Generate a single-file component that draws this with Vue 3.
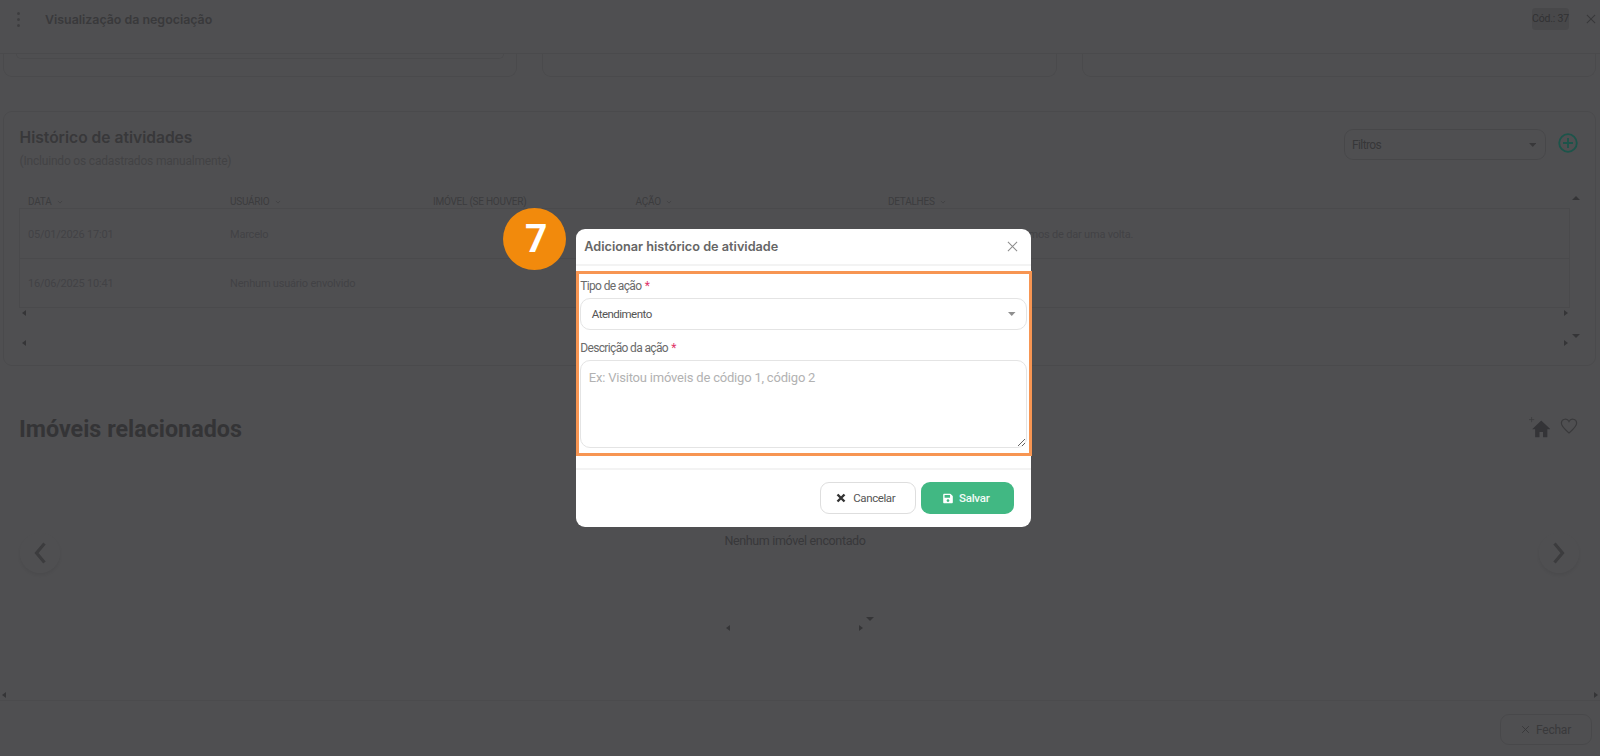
<script setup>
const columns = [
  { label: 'Data', sort: true },
  { label: 'Usuário', sort: true },
  { label: 'Imóvel (se houver)', sort: false },
  { label: 'Ação', sort: true },
  { label: 'Detalhes', sort: true },
]
const rows = [
  { date: '05/01/2026 17:01', user: 'Marcelo', details: 'Fez contato com cliente e ficamos de dar uma volta.' },
  { date: '16/06/2025 10:41', user: 'Nenhum usuário envolvido', details: '' },
]
</script>

<template>
  <div class="page">
    <header class="topbar">
      <div class="topbar-left">
        <span class="dots"><i></i><i></i><i></i></span>
        <h1 class="topbar-title">Visualização da negociação</h1>
      </div>
      <div class="topbar-right">
        <span class="code">Cód.: 37</span>
        <svg class="topbar-close" viewBox="0 0 12 12"><path d="M1 1l10 10M11 1L1 11" /></svg>
      </div>
    </header>

    <main class="content">
      <section class="cards">
        <div class="mini-card"><div class="mini-inner"></div></div>
        <div class="mini-card"></div>
        <div class="mini-card"></div>
      </section>

      <section class="history">
        <div class="history-head">
          <div>
            <h2 class="history-title">Histórico de atividades</h2>
            <p class="history-sub">(Incluindo os cadastrados manualmente)</p>
          </div>
          <div class="history-tools">
            <div class="filter">
              <span>Filtros</span>
              <svg class="caret" viewBox="0 0 10 5" preserveAspectRatio="none"><path d="M0 0h10L5 5z" /></svg>
            </div>
            <svg class="plus" viewBox="0 0 20 20">
              <circle cx="10" cy="10" r="8.800" />
              <path d="M10 5v10M5 10h10" />
            </svg>
          </div>
        </div>

        <div class="history-body">
          <div class="table-area">
            <div class="table-row table-header">
              <div v-for="col in columns" :key="col.label" class="th">
                {{ col.label }}
                <svg v-if="col.sort" class="sort" viewBox="0 0 8 5"><path d="M1 1l3 3 3-3" /></svg>
              </div>
            </div>
            <div class="table-rows">
              <div v-for="row in rows" :key="row.date" class="table-row tr">
                <div class="td">{{ row.date }}</div>
                <div class="td">{{ row.user }}</div>
                <div class="td"></div>
                <div class="td"></div>
                <div class="td">{{ row.details }}</div>
              </div>
            </div>
            <div class="hbar"><span class="tri tri-l"></span><span class="tri tri-r"></span></div>
            <div class="hbar hbar-second"><span class="tri tri-l"></span><span class="tri tri-r"></span></div>
          </div>
          <div class="vbar"><span class="tri tri-u"></span><span class="tri tri-d"></span></div>
        </div>
      </section>

      <section class="related">
        <div class="related-head">
          <h2 class="related-title">Imóveis relacionados</h2>
          <div class="related-icons">
            <svg class="home" viewBox="0 0 24 24">
              <path class="spark" d="M3 0v6M0 3h6" />
              <path d="M14 4L3.500 14H7v9h5v-6h4v6h5v-9h3.500z" />
            </svg>
            <svg class="heart" viewBox="0 0 24 22">
              <path d="M12 20.500C6 15.500 1.500 12 1.500 7A5.500 5.500 0 0 1 12 4.800 5.500 5.500 0 0 1 22.500 7c0 5-4.500 8.500-10.500 13.500z" />
            </svg>
          </div>
        </div>
        <div class="carousel">
          <button class="nav-circle" type="button">
            <svg viewBox="0 0 14 24"><path d="M11.500 2.500L3.500 12l8 9.500" /></svg>
          </button>
          <div class="carousel-center">
            <div class="carousel-inner">
              <p class="empty">Nenhum imóvel encontado</p>
              <div class="hbar carousel-bar"><span class="tri tri-l"></span><span class="tri tri-r"></span></div>
              <span class="tri tri-d carousel-down"></span>
            </div>
          </div>
          <button class="nav-circle" type="button">
            <svg viewBox="0 0 14 24"><path d="M2.500 2.500l8 9.500-8 9.500" /></svg>
          </button>
        </div>
      </section>

      <div class="hbar page-bar"><span class="tri tri-l"></span><span class="tri tri-r"></span></div>
    </main>

    <footer class="footer">
      <button class="close-btn" type="button">
        <svg viewBox="0 0 12 12"><path d="M1.500 1.500l9 9M10.500 1.500l-9 9" /></svg>
        Fechar
      </button>
    </footer>

    <div class="backdrop">
      <div class="modal">
        <div class="badge">7</div>
        <div class="modal-head">
          <h3 class="modal-title">Adicionar histórico de atividade</h3>
          <svg class="modal-close" viewBox="0 0 12 12"><path d="M1 1l10 10M11 1L1 11" /></svg>
        </div>
        <div class="modal-body">
          <label class="field-label">Tipo de ação <b>*</b></label>
          <div class="select">
            <span>Atendimento</span>
            <svg class="caret" viewBox="0 0 10 5" preserveAspectRatio="none"><path d="M0 0h10L5 5z" /></svg>
          </div>
          <label class="field-label second">Descrição da ação <b>*</b></label>
          <textarea class="textarea" placeholder="Ex: Visitou imóveis de código 1, código 2"></textarea>
        </div>
        <div class="modal-foot">
          <button class="btn btn-cancel" type="button">
            <svg viewBox="0 0 10 10"><path d="M1.500 1.500l7 7M8.500 1.500l-7 7" /></svg>
            Cancelar
          </button>
          <button class="btn btn-save" type="button">
            <svg viewBox="0 0 448 512"><path d="M433.900 129.900l-83.900-83.900A48 48 0 0 0 316.100 32H48C21.500 32 0 53.500 0 80v352c0 26.500 21.500 48 48 48h352c26.500 0 48-21.500 48-48V163.900a48 48 0 0 0-14.100-34zM224 416c-35.300 0-64-28.700-64-64 0-35.300 28.700-64 64-64s64 28.700 64 64c0 35.300-28.700 64-64 64zm96-304.500V212c0 6.600-5.400 12-12 12H76c-6.600 0-12-5.400-12-12V108c0-6.600 5.400-12 12-12h228.500c3.200 0 6.200 1.300 8.500 3.500l3.500 3.500c2.200 2.200 3.500 5.300 3.500 8.500z" /></svg>
            Salvar
          </button>
        </div>
        <div class="highlight"></div>
      </div>
    </div>
  </div>
</template>

<style>
html, body { margin: 0; background: #fff; }
</style>

<style scoped>
* { box-sizing: border-box; }
.page {
  position: relative;
  width: 1600px;
  height: 756px;
  overflow: hidden;
  display: flex;
  flex-direction: column;
  background: #fff;
  font-family: Roboto, "Liberation Sans", sans-serif;
  color: #d8d8d8;
}
h1, h2, h3, p { margin: 0; }
button { font-family: inherit; background: none; padding: 0; }

.topbar {
  flex: none;
  height: 54px;
  padding-bottom: 15px;
  border-bottom: 1px solid #eee;
  display: flex;
  align-items: center;
  justify-content: space-between;
}
.topbar-left { display: flex; align-items: center; }
.dots { display: flex; flex-direction: column; gap: 3px; margin-left: 17px; width: 28px; }
.dots i { width: 3px; height: 3px; border-radius: 50%; background: #c6c6c6; }
.topbar-title { font: 600 12.400px Inter, sans-serif; color: #b8b8b8; }
.topbar-right { display: flex; align-items: center; gap: 18px; padding-right: 4px; }
.code {
  width: 37px;
  height: 22px;
  line-height: 21px;
  text-align: center;
  font-size: 10.500px;
  letter-spacing: -0.200px;
  background: #e9e9e9;
  border-radius: 3px;
  color: #a0a0a0;
  white-space: nowrap;
  transform: translateX(1px);
}
.topbar-close { width: 10px; height: 10px; fill: none; stroke: #b5b5b5; stroke-width: 1.300; }

.content { flex: 1; min-height: 0; position: relative; display: flex; flex-direction: column; }
.cards {
  flex: none;
  height: 23px;
  padding: 0 4px 0 3px;
  display: grid;
  grid-template-columns: repeat(3, 1fr);
  gap: 25px;
}
.mini-card {
  border: 1px solid #eee;
  border-top: 0;
  border-radius: 0 0 9px 9px;
  padding: 0 12px;
}
.mini-inner {
  height: 5px;
  border: 1px solid #eee;
  border-top: 0;
  border-radius: 0 0 8px 8px;
}

.history {
  flex: none;
  height: 255px;
  margin: 34px 4px 0 3px;
  border: 1px solid #eee;
  border-radius: 9px;
  display: flex;
  flex-direction: column;
}
.history-head {
  flex: none;
  display: flex;
  justify-content: space-between;
  padding: 16px 17px 0 15.500px;
  height: 56px;
}
.history-title { font: 600 15.600px/20px Inter, sans-serif; color: #b4b4b4; }
.history-sub { margin-top: 5px; font-size: 12px; line-height: 16px; letter-spacing: -0.190px; color: #d6d6d6; }
.history-tools { display: flex; gap: 12px; align-items: flex-start; margin-top: 1px; }
.filter {
  width: 202px;
  height: 31px;
  border: 1px solid #e6e6e6;
  border-radius: 9px;
  display: flex;
  align-items: center;
  justify-content: space-between;
  padding: 0 9px 0 7px;
  font-size: 12px;
  letter-spacing: -0.600px;
  color: #b2b2b2;
}
.caret { width: 7.500px; height: 4px; fill: #b5b5b5; }
.plus {
  position: relative;
  z-index: 1;
  width: 20px;
  height: 20px;
  margin-top: 4px;
  fill: none;
  stroke: #1c544a;
  stroke-width: 1.800;
}

.history-body { flex: 1; min-height: 0; display: flex; padding-left: 15px; }
.table-area { width: 1551px; flex: none; }
.table-row { display: grid; grid-template-columns: 202px 203px 202.500px 252.500px 1fr; }
.table-header { height: 40px; align-items: end; }
.th {
  padding-left: 9px;
  font-size: 10px;
  line-height: 14px;
  text-transform: uppercase;
  color: #c2c2c2;
  letter-spacing: -0.250px;
  white-space: nowrap;
  transform: translateY(1px);
}
.sort { width: 6px; height: 4px; margin-left: 3px; vertical-align: 1px; fill: none; stroke: #c6c6c6; }
.table-rows { border: 1px solid #eee; }
.tr { height: 49.500px; align-items: center; border-bottom: 1px solid #eee; }
.tr:last-child { border-bottom: 0; height: 48.500px; }
.td { padding: 2px 0 0 8px; font-size: 11px; letter-spacing: -0.200px; color: #d4d4d8; white-space: nowrap; }

.hbar { display: flex; justify-content: space-between; align-items: center; height: 10px; padding: 0 2px 0 3px; }
.hbar-second { margin-top: 20px; }
.tri { width: 0; height: 0; border-style: solid; border-color: transparent; }
.tri-l { border-width: 3.500px 4px 3.500px 0; border-right-color: #aaa; }
.tri-r { border-width: 3.500px 0 3.500px 4px; border-left-color: #aaa; }
.tri-u { border-width: 0 4px 4px; border-bottom-color: #aaa; }
.tri-d { border-width: 4px 4px 0; border-top-color: #aaa; }
.vbar {
  flex: none;
  height: 142px;
  margin-top: 28px;
  width: 10px;
  padding-left: 1px;
  display: flex;
  flex-direction: column;
  justify-content: space-between;
  align-items: center;
}

.related { flex: none; padding: 0 21px 0 20px; margin-top: 48px; }
.related-head { display: flex; justify-content: space-between; height: 30px; }
.related-title { font: 700 23.300px/30px Roboto, sans-serif; color: #a8a8a8; margin-left: -1px; }
.related-icons { display: flex; gap: 10px; align-items: flex-start; margin-right: 1px; }
.home { width: 21px; height: 21px; margin-top: 3px; fill: #a8a8ac; }
.spark { fill: none; stroke: #c4c4c4; stroke-width: 1; }
.heart { width: 18px; height: 16px; margin-top: 4px; fill: none; stroke: #b9b9b9; stroke-width: 1.700; }

.carousel { display: grid; grid-template-columns: 40px 1fr 40px; align-items: start; }
.nav-circle {
  width: 40px;
  height: 40px;
  margin-top: 89px;
  border: 0;
  border-radius: 50%;
  background: #fff;
  box-shadow: 0 2px 5px rgba(0, 0, 0, 0.08);
  display: flex;
  align-items: center;
  justify-content: center;
}
.nav-circle svg { width: 14px; height: 24px; fill: none; stroke: #c0c0c0; stroke-width: 3.200; }
.carousel-center { display: flex; justify-content: center; padding-right: 9px; }
.carousel-inner { position: relative; width: 142px; padding-top: 89px; }
.empty { font-size: 12.500px; line-height: 16px; letter-spacing: -0.350px; text-align: center; color: #b4b4b6; white-space: nowrap; }
.carousel-bar { margin-top: 74px; padding: 0 3px 0 2px; }
.carousel-down { position: absolute; right: -8px; top: 173px; }
.page-bar { margin-top: auto; padding: 0 2px; }

.footer { flex: none; height: 56px; border-top: 1px solid #f0f0f0; display: flex; justify-content: flex-end; padding: 13px 8px 0 0; }
.close-btn {
  width: 92px;
  height: 31px;
  border: 1px solid #e8e8e8;
  border-radius: 9px;
  display: flex;
  align-items: center;
  justify-content: center;
  gap: 6px;
  font-size: 12px;
  letter-spacing: -0.200px;
  color: #b8b8b8;
}
.close-btn svg { width: 9px; height: 9px; fill: none; stroke: #b0b0b0; stroke-width: 1.200; }

.backdrop {
  position: absolute;
  inset: 0;
  padding-left: 7px;
  background: rgba(0, 0, 3, 0.69);
  display: flex;
  align-items: center;
  justify-content: center;
}
.modal {
  position: relative;
  width: 455.500px;
  height: 297.500px;
  background: #fff;
  border-radius: 9px;
  display: flex;
  flex-direction: column;
  color: #555;
}
.badge {
  position: absolute;
  left: -72.500px;
  top: -21px;
  width: 63px;
  height: 62px;
  padding-left: 3px;
  border-radius: 50%;
  background: #f28a0c;
  color: #fff;
  font: 700 39px/62px Roboto, sans-serif;
  text-align: center;
}
.modal-head {
  flex: none;
  height: 36.500px;
  border-bottom: 2px solid #f3f3f3;
  display: flex;
  align-items: center;
  justify-content: space-between;
  padding: 0 13px 0 8.500px;
}
.modal-title { font: 600 12.700px Inter, sans-serif; color: #666; }
.modal-close { width: 11px; height: 11px; fill: none; stroke: #8c8c8c; stroke-width: 1.100; }
.modal-body { flex: none; height: 202px; padding: 12px 4.500px 0 4.500px; display: flex; flex-direction: column; }
.field-label { display: block; font-size: 12px; line-height: 16px; letter-spacing: -0.650px; color: #6a6a6a; margin-bottom: 4px; }
.field-label b { color: #e0356a; font-weight: 400; margin-left: 1px; }
.field-label.second { margin-top: 10px; }
.select {
  height: 32px;
  flex: none;
  border: 1px solid #e4e4e4;
  border-radius: 10px;
  display: flex;
  align-items: center;
  justify-content: space-between;
  padding: 1px 10px 0 10.500px;
  font-size: 11.500px;
  letter-spacing: -0.520px;
  color: #555;
}
.select .caret { fill: #8f8f8f; }
.textarea {
  display: block;
  flex: none;
  width: 100%;
  height: 88px;
  border: 1px solid #e4e4e4;
  border-radius: 10px;
  padding: 8px 7.500px;
  outline: 0;
  font: 13px/18px Roboto, sans-serif;
  letter-spacing: -0.200px;
  color: #555;
}
.textarea::placeholder { color: #b2b2b2; opacity: 1; }
.modal-foot {
  flex: 1;
  border-top: 2px solid #f3f3f3;
  display: flex;
  justify-content: flex-end;
  gap: 5.500px;
  padding: 12px 17px 0 0;
}
.btn {
  height: 32px;
  border-radius: 9px;
  display: flex;
  align-items: center;
  justify-content: center;
  font-size: 11.500px;
  line-height: 15px;
  cursor: pointer;
}
.btn-cancel { width: 96px; border: 1px solid #dedede; color: #555; gap: 7px; letter-spacing: -0.400px; padding: 1px 4px 0 0; }
.btn-cancel svg { width: 10px; height: 10px; fill: none; stroke: #333; stroke-width: 2.400; }
.btn-save { width: 93px; border: 0; background: #41b883; color: #f2fbf7; font-weight: 500; gap: 6px; letter-spacing: -0.230px; padding: 1px 3px 0 0; }
.btn-save svg { width: 10px; height: 11px; fill: #fff; }
.highlight {
  position: absolute;
  left: 0;
  right: -1px;
  top: 41.500px;
  height: 185.500px;
  border: 3.500px solid #f79552;
  pointer-events: none;
}
</style>
